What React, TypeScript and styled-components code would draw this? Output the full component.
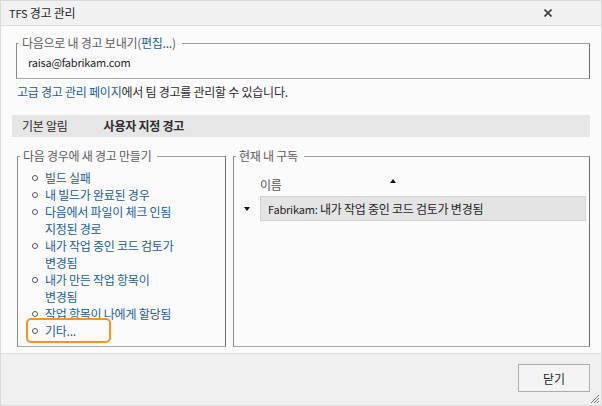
import React from "react";
import styled, { createGlobalStyle } from "styled-components";

const GlobalStyle = createGlobalStyle`
  html, body { margin: 0; padding: 0; background: #fbfbfb; }
  body {
    font-family: "Noto Sans CJK KR", "Noto Sans", sans-serif;
    font-size: 12px;
    letter-spacing: -0.25px;
    color: #1e1e1e;
  }
  * { box-sizing: border-box; }
`;

const Window = styled.div`
  width: 602px;
  height: 406px;
  border: 1px solid #dadada;
  display: flex;
  flex-direction: column;
  background: #fbfbfb;
  overflow: hidden;
`;

const TitleBar = styled.div`
  height: 25px;
  flex: none;
  display: flex;
  align-items: center;
  justify-content: space-between;
  padding-left: 8px;
  background: #f1f1f1;
  border-bottom: 1px solid #dcdcdc;
`;

const Title = styled.div`
  line-height: 16px;
  color: #1e1e1e;
`;

const CloseButton = styled.div`
  width: 8px;
  height: 8px;
  margin-right: 49px;
  display: flex;
`;

const Latin = styled.span`
  font-size: 11px;
  letter-spacing: -0.2px;
`;

const Content = styled.div`
  flex: 1;
  min-height: 0;
  display: flex;
  flex-direction: column;
  padding: 9px 11px 6px;
`;

const Group = styled.fieldset<{ $width?: number }>`
  margin: 0;
  padding: 0;
  min-width: 0;
  border: 1px solid;
  border-color: #a0a0a0 #6e6e6e #a8a8a8 #8a8a8a;
  display: flex;
  flex-direction: column;
  ${(p) => (p.$width ? `width: ${p.$width}px; flex: none;` : `flex: 1;`)}
`;

const AddressGroup = styled(Group)`
  margin-left: 4px;
  flex: none;
`;

const Legend = styled.legend`
  margin-left: 2px;
  padding: 0 6px 0 3px;
  line-height: 16px;
  color: #5c5c5c;
`;

const Link = styled.span`
  color: #1a5d9c;
`;

const Email = styled.div`
  line-height: 22px;
  padding: 0 11px 5px;
`;

const Note = styled.div`
  margin: 5px 0 0 5px;
  line-height: 16px;
  color: #2a2a2a;
`;

const TabStrip = styled.div`
  margin-top: 15px;
  height: 22px;
  flex: none;
  display: flex;
  align-items: center;
  gap: 36px;
  padding-left: 10px;
  background: #e6e6e6;
`;

const Tab = styled.div<{ $active?: boolean }>`
  color: #2b2b2b;
  font-weight: ${(p) => (p.$active ? 700 : 400)};
  line-height: 16px;
`;

const Panels = styled.div`
  flex: 1;
  min-height: 0;
  display: flex;
  gap: 7px;
  margin: 11px 0 0 5px;
`;

const List = styled.ul`
  list-style: none;
  margin: 0;
  padding: 5px 0 0 13px;
`;

const Item = styled.li<{ $highlight?: boolean }>`
  position: relative;
  display: flex;
  align-items: flex-start;
  line-height: 17px;
  color: #1a5d9c;
  ${(p) =>
    p.$highlight
      ? `
    &::after {
      content: "";
      position: absolute;
      left: -5px;
      top: -4px;
      width: 81px;
      height: 21px;
      border: 2px solid #f7931e;
      border-radius: 5px;
    }
  `
      : ""}
`;

const Bullet = styled.span`
  flex: none;
  width: 14px;
  height: 17px;
  display: flex;
  align-items: center;
  padding-left: 1px;
  &::before {
    content: "";
    width: 4px;
    height: 4px;
    border: 1px solid #555;
    border-radius: 50%;
  }
`;

const Header = styled.div`
  display: grid;
  grid-template-columns: 130px auto;
  margin-top: 13px;
  padding-left: 26px;
  line-height: 16px;
  color: #555;
`;

const SortUp = styled.span`
  width: 0;
  height: 0;
  margin-top: 2px;
  border-left: 3.5px solid transparent;
  border-right: 3.5px solid transparent;
  border-bottom: 4px solid #111;
`;

const Row = styled.div`
  display: flex;
  align-items: center;
  margin: 3px 3px 0 0;
  padding-left: 10px;
`;

const Expander = styled.span`
  flex: none;
  width: 16px;
  display: flex;
  &::before {
    content: "";
    width: 0;
    height: 0;
    border-left: 3.5px solid transparent;
    border-right: 3.5px solid transparent;
    border-top: 4px solid #111;
  }
`;

const RowBox = styled.div`
  flex: 1;
  height: 25px;
  line-height: 23px;
  padding-left: 7px;
  background: #e4e4e4;
  border: 1px solid #d3d3d3;
  color: #1e1e1e;
`;

const Footer = styled.div`
  position: relative;
  height: 52px;
  flex: none;
  display: flex;
  justify-content: flex-end;
  align-items: flex-start;
  padding: 10px 11px 0 0;
  background: #f0f0f0;
  border-top: 1px solid #dfdfdf;
`;

const Button = styled.button`
  width: 72px;
  height: 28px;
  border: 1px solid #adadad;
  background: #f4f4f4;
  font: inherit;
  color: #1e1e1e;
  padding: 0;
`;

const Grip = styled.svg`
  position: absolute;
  right: 1px;
  bottom: 1px;
`;

const items: { lines: string[]; highlight?: boolean }[] = [
  { lines: ["빌드 실패"] },
  { lines: ["내 빌드가 완료된 경우"] },
  { lines: ["다음에서 파일이 체크 인됨", "지정된 경로"] },
  { lines: ["내가 작업 중인 코드 검토가", "변경됨"] },
  { lines: ["내가 만든 작업 항목이", "변경됨"] },
  { lines: ["작업 항목이 나에게 할당됨"] },
  { lines: ["기타..."], highlight: true },
];

export default function App() {
  return (
    <>
      <GlobalStyle />
      <Window>
        <TitleBar>
          <Title>
            <Latin>TFS</Latin> 경고 관리
          </Title>
          <CloseButton>
            <svg width="8" height="8" viewBox="0 0 8 8">
              <path d="M0.5 0.5 L7.5 7.5 M7.5 0.5 L0.5 7.5" stroke="#3c3c3c" strokeWidth="1.6" />
            </svg>
          </CloseButton>
        </TitleBar>
        <Content>
          <AddressGroup>
            <Legend>
              다음으로 내 경고 보내기(<Link>편집...</Link>)
            </Legend>
            <Email>
              <Latin>raisa@fabrikam.com</Latin>
            </Email>
          </AddressGroup>
          <Note>
            <Link>고급 경고 관리 페이지</Link>에서 팀 경고를 관리할 수 있습니다.
          </Note>
          <TabStrip>
            <Tab>기본 알림</Tab>
            <Tab $active>사용자 지정 경고</Tab>
          </TabStrip>
          <Panels>
            <Group $width={209}>
              <Legend>다음 경우에 새 경고 만들기</Legend>
              <List>
                {items.map((it, i) => (
                  <Item key={i} $highlight={it.highlight}>
                    <Bullet />
                    <span>
                      {it.lines.map((l, j) => (
                        <React.Fragment key={j}>
                          {j > 0 && <br />}
                          {l}
                        </React.Fragment>
                      ))}
                    </span>
                  </Item>
                ))}
              </List>
            </Group>
            <Group>
              <Legend>현재 내 구독</Legend>
              <Header>
                <span>이름</span>
                <SortUp />
              </Header>
              <Row>
                <Expander />
                <RowBox>
                  <Latin>Fabrikam:</Latin> 내가 작업 중인 코드 검토가 변경됨
                </RowBox>
              </Row>
            </Group>
          </Panels>
        </Content>
        <Footer>
          <Button>닫기</Button>
          <Grip width="12" height="12" viewBox="0 0 12 12">
            <path d="M11 3 L3 11 M11 6 L6 11 M11 9 L9 11" stroke="#7a7a7a" strokeWidth="1" />
          </Grip>
        </Footer>
      </Window>
    </>
  );
}
